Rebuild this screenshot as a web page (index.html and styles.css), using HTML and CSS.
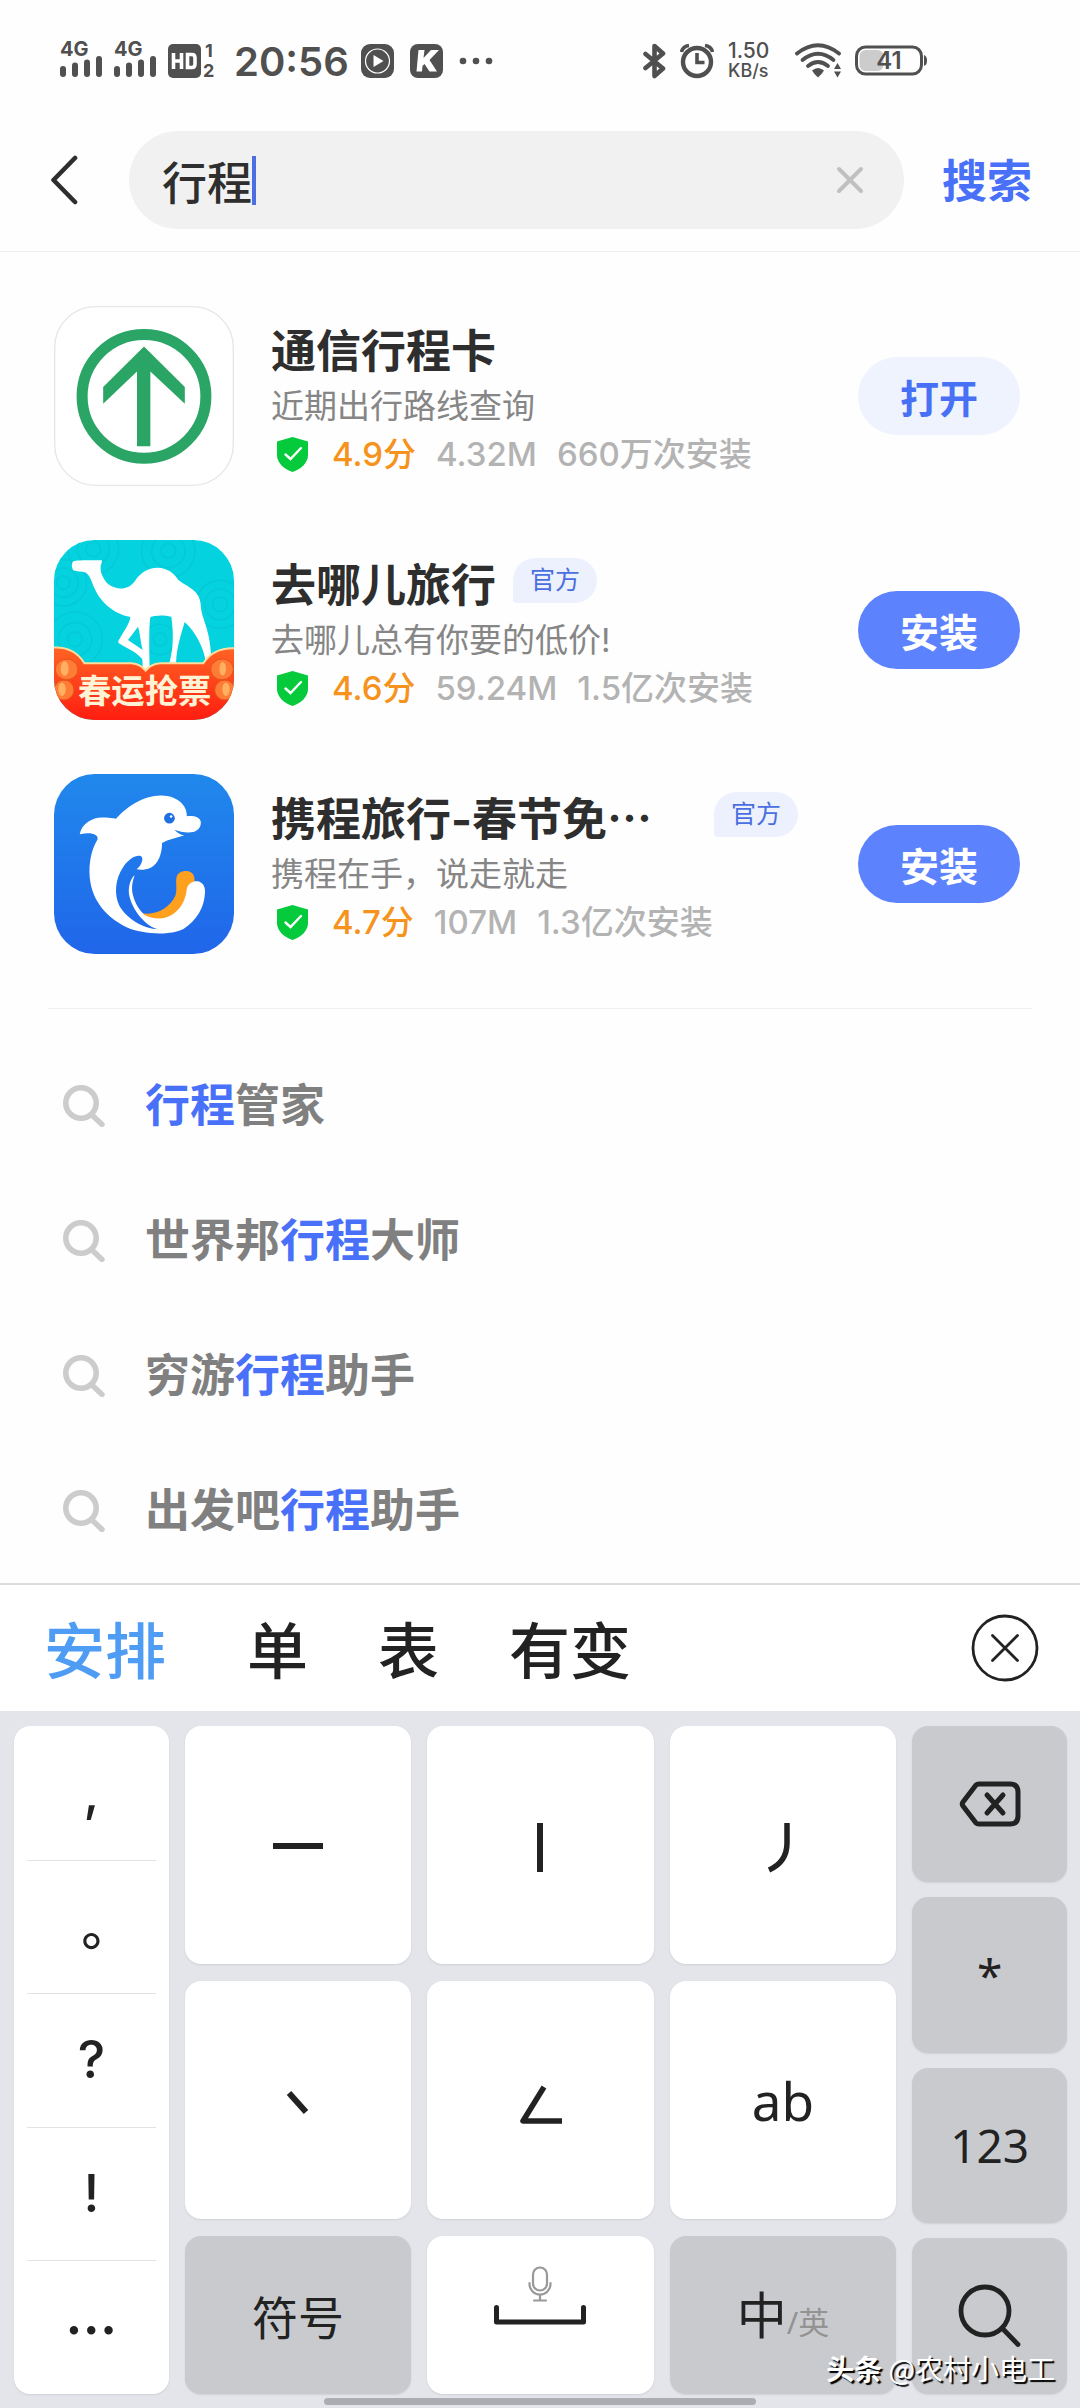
FILE: index.html
```html
<!DOCTYPE html>
<html lang="zh-CN">
<head>
<meta charset="utf-8">
<meta name="viewport" content="width=device-width, initial-scale=1">
<title>行程 - 搜索</title>
<link rel="stylesheet" href="styles.css">
</head>
<body>
<svg class="sprite" aria-hidden="true">
  <symbol id="shield" viewBox="0 0 31 35"><path d="M15.500 0 L31 4.500 V18 C31 26 24 32 15.500 35 C7 32 0 26 0 18 V4.500Z" fill="#04ca3c"/><path d="M8.500 17.500 L13.500 22 L24 11" fill="none" stroke="#fff" stroke-width="2.400" stroke-linecap="round"/></symbol>
  <symbol id="magnifier" viewBox="0 0 42 42"><circle cx="18" cy="18" r="15.200" fill="none" stroke="#ccc" stroke-width="5.600"/><path d="M29 30 L39 39.500" stroke="#ccc" stroke-width="5.400" stroke-linecap="round"/></symbol>
  <symbol id="bars" viewBox="0 0 42 21"><g fill="#505050"><rect x="0" y="10" width="6" height="11" rx="3"/><rect x="12" y="6.500" width="6" height="14.500" rx="3"/><rect x="24" y="3.500" width="6" height="17.500" rx="3"/><rect x="36" y="0" width="6" height="21" rx="3"/></g></symbol>
</svg>

<div class="status-bar">
  <svg class="signal" width="42" height="42" viewBox="0 0 42 42"><text x="0" y="21" class="signal-text">4G</text><use href="#bars" y="21" width="42" height="21"/></svg>
  <svg class="signal" width="42" height="42" viewBox="0 0 42 42"><text x="0" y="21" class="signal-text">4G</text><use href="#bars" y="21" width="42" height="21"/></svg>
  <svg width="48" height="46" viewBox="0 -5 48 46">
    <rect x="0" y="1" width="33" height="34" rx="5" fill="#505050"/>
    <path d="M5.500 10 V26 M13.500 10 V26 M5.500 18 H13.500 M19.500 11.500 H24 Q27 11.500 27 15 V21 Q27 24.500 24 24.500 H19.500Z" fill="none" stroke="#fff" stroke-width="3.600"/>
    <text x="37" y="14" class="sim-text">1</text><text x="35" y="34" class="sim-text">2</text>
  </svg>
  <time class="clock">20:56</time>
  <svg width="33" height="34" viewBox="0 0 33 34"><rect width="33" height="34" rx="9" fill="#505050"/><circle cx="16.500" cy="17" r="12" fill="none" stroke="#fff" stroke-width="1.200"/><path d="M12.500 11 L22.500 17 L12.500 23Z" fill="#fff"/></svg>
  <svg class="app-k" width="33" height="34" viewBox="0 0 33 34"><rect width="33" height="34" rx="8" fill="#505050"/><path d="M8.500 6 H14.500 L13.500 14 L21 6 H29 L19.500 16 L27 27.500 H19.500 L14.500 20 L12.500 22 L12 27.500 H6.500Z" fill="#fff"/></svg>
  <svg width="34" height="8" viewBox="0 0 34 8" fill="#505050"><circle cx="4" cy="4" r="3.300"/><circle cx="17" cy="4" r="3.300"/><circle cx="30" cy="4" r="3.300"/></svg>
  <div class="status-right">
    <svg width="23" height="36" viewBox="0 0 23 36" fill="none" stroke="#505050" stroke-width="4.600" stroke-linejoin="round" stroke-linecap="round"><path d="M2.500 11 L20 25.500 L11.500 33 V3 L20 10.500 L2.500 25"/></svg>
    <svg width="34" height="36" viewBox="0 0 34 36" fill="none" stroke="#505050"><circle cx="17" cy="19" r="14" stroke-width="4.400"/><path d="M17 10 V19.500 H24.500" stroke-width="3.600"/><path d="M1.500 9 Q2.500 3.500 9 2.500 M32.500 9 Q31.500 3.500 25 2.500" stroke-width="3.600"/></svg>
    <div class="net-speed"><span class="net-value">1.50</span><span class="net-unit">KB/s</span></div>
    <svg width="46" height="36" viewBox="0 0 46 36"><g fill="none" stroke="#505050" stroke-width="3.800" stroke-linecap="round"><path d="M2 10.500 Q23 -6 44 10.500"/><path d="M7.500 17 Q23 4.500 38.500 17"/><path d="M13 23 Q23 15 33 23"/></g><path d="M17 27.500 Q23 22.500 29 27.500 Q27 31 23 34.500 Q19 31 17 27.500Z M39 26 L42.500 20 L46 26Z M39 28.500 L42.500 34.500 L46 28.500Z" fill="#505050"/></svg>
    <svg width="72" height="32" viewBox="0 0 72 32"><rect x="4.500" y="5" width="24" height="21" rx="6" fill="#ccc"/><rect x="1.500" y="2" width="65" height="27" rx="9" fill="none" stroke="#505050" stroke-width="3"/><path d="M69 10 Q72 11 72 15.500 Q72 20 69 21Z" fill="#505050"/><text x="34" y="24" class="battery-text" text-anchor="middle">41</text></svg>
  </div>
</div>

<header class="search-header">
  <button class="icon-button" type="button" aria-label="返回"><svg width="28" height="50" viewBox="0 0 28 50"><path d="M25 3 L3.500 25 L25 47" fill="none" stroke="#2e2e2e" stroke-width="4.600" stroke-linecap="round" stroke-linejoin="round"/></svg></button>
  <form class="search-form" role="search">
    <div class="search-field">
      <input class="search-input" type="text" value="行程" aria-label="搜索应用">
      <span class="caret"></span>
      <button class="icon-button clear" type="button" aria-label="清除"><svg width="28" height="28" viewBox="0 0 28 28"><path d="M3 3 L25 25 M25 3 L3 25" stroke="#c0c0c0" stroke-width="4" stroke-linecap="round"/></svg></button>
    </div>
    <button class="search-submit" type="submit">搜索</button>
  </form>
</header>

<main class="results">
  <section class="apps">
    <article class="app">
      <svg class="app-icon" viewBox="73 48 538 538" role="img" aria-label="通信行程卡">
        <rect x="75" y="50" width="534" height="534" rx="122" fill="#fff" stroke="#e6e6e6" stroke-width="4"/>
        <circle cx="342" cy="318" r="185" fill="none" stroke="#2ba566" stroke-width="33"/>
        <path d="M342 169 L464 290 V340 L361 244 V467 H321 V244 L220 340 V290Z" fill="#2ba566"/>
      </svg>
      <div class="info">
        <div class="title-row"><h2 class="title">通信行程卡</h2></div>
        <p class="summary">近期出行路线查询</p>
        <p class="meta"><svg class="shield" width="31" height="35"><use href="#shield"/></svg><span class="score">4.9分</span><span>4.32M</span><span>660万次安装</span></p>
      </div>
      <button class="action open" type="button">打开</button>
    </article>

    <article class="app">
      <svg class="app-icon" viewBox="12 12 540 540" role="img" aria-label="去哪儿旅行">
        <defs>
          <clipPath id="camel-clip"><rect x="12" y="12" width="540" height="540" rx="122"/></clipPath>
          <linearGradient id="banner" x1="0" y1="0" x2="0" y2="1"><stop offset="0" stop-color="#ff6424"/><stop offset="1" stop-color="#ff1c10"/></linearGradient>
        </defs>
        <g clip-path="url(#camel-clip)">
          <rect x="12" y="12" width="540" height="540" fill="#04d3df"/>
          <g fill="none" stroke="#05c9d7" stroke-width="5">
            <circle cx="130" cy="40" r="22"/><circle cx="130" cy="40" r="48"/><circle cx="130" cy="40" r="76"/>
            <circle cx="355" cy="45" r="22"/><circle cx="355" cy="45" r="50"/><circle cx="355" cy="45" r="80"/>
            <circle cx="40" cy="140" r="20"/><circle cx="40" cy="140" r="44"/><circle cx="40" cy="140" r="70"/>
            <circle cx="75" cy="310" r="22"/><circle cx="75" cy="310" r="50"/><circle cx="75" cy="310" r="82"/>
            <circle cx="510" cy="205" r="22"/><circle cx="510" cy="205" r="46"/><circle cx="510" cy="205" r="72"/>
            <circle cx="330" cy="310" r="20"/><circle cx="330" cy="310" r="46"/>
          </g>
          <path fill="#fff" fill-rule="evenodd" d="M70 76 C80 72 130 73 155 73 C158 80 152 85 152 90 C150 110 160 130 175 145 C200 163 235 163 255 135 C270 110 295 95 322 95 C355 95 375 115 385 132 C400 145 430 155 445 180 C455 200 450 215 458 240 C470 275 482 310 483 362 L467 376 C462 340 440 290 404 258 C395 290 380 330 378 382 L358 382 C372 330 370 290 364 242 C340 236 310 238 301 244 C296 280 298 340 299 400 L278 398 C278 380 278 375 276 368 C255 345 225 335 212 325 C203 320 203 315 209 308 C222 285 238 265 241 243 C190 235 150 195 135 160 C125 140 122 120 108 110 C95 105 80 108 70 103 C64 95 64 82 70 76Z M264 272 L234 312 L278 342 C271 315 270 290 264 272Z"/>
          <path d="M8 335 C50 330 85 350 103 382 L245 382 C265 384 278 392 287 404 C296 392 310 384 330 382 L460 382 C480 350 515 335 556 337 V556 H8Z" fill="url(#banner)" stroke="#ffdc9c" stroke-width="6"/>
          <g fill="#ff7c36" stroke="#e2541c" stroke-width="3"><ellipse cx="50" cy="400" rx="34" ry="31"/><ellipse cx="42" cy="462" rx="30" ry="30"/><ellipse cx="516" cy="400" rx="34" ry="31"/><ellipse cx="524" cy="462" rx="30" ry="30"/></g>
          <g fill="#ffb060"><ellipse cx="44" cy="398" rx="12" ry="22"/><ellipse cx="36" cy="460" rx="11" ry="20"/><ellipse cx="518" cy="398" rx="10" ry="20"/><ellipse cx="528" cy="460" rx="11" ry="20"/></g>
          <text x="284" y="502" text-anchor="middle" class="banner-text">春运抢票</text>
        </g>
      </svg>
      <div class="info">
        <div class="title-row"><h2 class="title">去哪儿旅行</h2><span class="badge">官方</span></div>
        <p class="summary">去哪儿总有你要的低价!</p>
        <p class="meta"><svg class="shield" width="31" height="35"><use href="#shield"/></svg><span class="score">4.6分</span><span>59.24M</span><span>1.5亿次安装</span></p>
      </div>
      <button class="action" type="button">安装</button>
    </article>

    <article class="app">
      <svg class="app-icon" viewBox="73 42 538 538" role="img" aria-label="携程旅行">
        <defs><linearGradient id="sea" x1="0" y1="0" x2="0" y2="1"><stop offset="0" stop-color="#2088ec"/><stop offset="1" stop-color="#2066ea"/></linearGradient></defs>
        <rect x="73" y="42" width="538" height="538" rx="122" fill="url(#sea)"/>
        <path fill="#ffa01e" d="M335 458 C380 466 420 440 436 405 C442 385 436 370 439 352 C443 335 460 330 475 333 C490 337 496 350 492 372 C480 400 470 440 440 465 C400 490 355 480 335 458Z"/>
        <path fill="#fff" d="M150 222 C155 190 190 172 215 172 C235 172 250 174 258 176 C290 140 340 105 395 106 C440 107 472 135 470 168 C490 166 512 170 512 188 C512 208 495 217 475 217 C460 217 445 214 433 209 C440 218 452 224 462 226 C440 232 415 238 396 248 C396 280 385 310 362 322 C345 330 330 328 320 327 C332 318 340 300 336 291 C328 280 300 290 280 320 C256 355 252 400 268 435 C290 475 340 505 385 506 C350 500 305 450 297 400 C295 375 303 352 314 345 C308 360 304 380 308 400 C315 430 330 452 345 464 C390 484 425 472 450 440 C465 420 468 400 470 385 C475 365 495 360 508 364 C522 370 526 385 524 400 C522 440 500 480 460 505 C420 525 340 522 290 500 C220 465 180 410 179 335 C179 290 190 260 203 238 C206 222 185 215 150 222Z"/>
        <circle cx="418" cy="174" r="16" fill="#1d6fe2"/><circle cx="423" cy="169" r="4" fill="#fff"/>
      </svg>
      <div class="info">
        <div class="title-row"><h2 class="title">携程旅行-春节免<span class="more">…</span></h2><span class="badge">官方</span></div>
        <p class="summary">携程在手，说走就走</p>
        <p class="meta"><svg class="shield" width="31" height="35"><use href="#shield"/></svg><span class="score">4.7分</span><span>107M</span><span>1.3亿次安装</span></p>
      </div>
      <button class="action" type="button">安装</button>
    </article>
  </section>

  <ul class="suggestions">
    <li><a class="suggestion" href="#"><svg width="42" height="42"><use href="#magnifier"/></svg><span><em>行程</em>管家</span></a></li>
    <li><a class="suggestion" href="#"><svg width="42" height="42"><use href="#magnifier"/></svg><span>世界邦<em>行程</em>大师</span></a></li>
    <li><a class="suggestion" href="#"><svg width="42" height="42"><use href="#magnifier"/></svg><span>穷游<em>行程</em>助手</span></a></li>
    <li><a class="suggestion" href="#"><svg width="42" height="42"><use href="#magnifier"/></svg><span>出发吧<em>行程</em>助手</span></a></li>
  </ul>
</main>

<section class="keyboard" aria-label="键盘">
  <div class="candidates">
    <button class="candidate active" type="button">安排</button>
    <button class="candidate" type="button">单</button>
    <button class="candidate" type="button">表</button>
    <button class="candidate" type="button">有变</button>
    <button class="icon-button collapse" type="button" aria-label="收起"><svg width="68" height="68" viewBox="0 0 68 68" fill="none" stroke="#222" stroke-linecap="round"><circle cx="34" cy="34" r="32" stroke-width="2.800"/><path d="M21.500 21.500 L46.500 46.500 M46.500 21.500 L21.500 46.500" stroke-width="2.800"/></svg></button>
  </div>

  <div class="keypad">
    <div class="punctuation">
      <button class="mark" type="button">,</button>
      <button class="mark full-stop" type="button">。</button>
      <button class="mark" type="button">?</button>
      <button class="mark" type="button">!</button>
      <button class="mark ellipsis" type="button">…</button>
    </div>

    <div class="strokes">
      <button class="key" type="button" aria-label="横"><svg width="60" height="60" viewBox="0 0 60 60"><path d="M5 31 H55" stroke="#222" stroke-width="6"/></svg></button>
      <button class="key" type="button" aria-label="竖"><svg width="60" height="60" viewBox="0 0 60 60"><path d="M30 8 V57" stroke="#222" stroke-width="6"/></svg></button>
      <button class="key" type="button" aria-label="撇"><svg width="60" height="60" viewBox="0 0 60 60"><path d="M34 8 V28 Q34 47 16 55" fill="none" stroke="#222" stroke-width="5.500"/></svg></button>
      <button class="key" type="button" aria-label="点"><svg width="60" height="60" viewBox="0 0 60 60"><path d="M21 23 L38 42" stroke="#222" stroke-width="6"/></svg></button>
      <button class="key" type="button" aria-label="折"><svg width="60" height="60" viewBox="0 0 60 60"><path d="M34 17 L13 51 H52" fill="none" stroke="#222" stroke-width="5.500" stroke-linejoin="round"/></svg></button>
      <button class="key letters" type="button">ab</button>
      <button class="key gray" type="button">符号</button>
      <button class="key space" type="button" aria-label="空格">
        <svg width="24" height="36" viewBox="0 0 24 36" fill="none" stroke="#999" stroke-width="2.200" stroke-linecap="round"><rect x="5" y="1.500" width="14" height="23" rx="7"/><path d="M1.500 17 V18 A10.500 10.500 0 0 0 22.500 18 V17 M12 29 V34 M6 34.500 H18"/></svg>
        <svg width="92" height="20" viewBox="0 0 92 20"><path d="M2.500 2.500 V17 H89.500 V2.500" fill="none" stroke="#222" stroke-width="5" stroke-linecap="round" stroke-linejoin="round"/></svg>
      </button>
      <button class="key gray language" type="button"><span>中</span><span class="alt">/英</span></button>
    </div>

    <div class="functions">
      <button class="key gray" type="button" aria-label="删除"><svg width="62" height="46" viewBox="0 0 62 46" fill="none" stroke="#222" stroke-width="5" stroke-linejoin="round" stroke-linecap="round"><path d="M20 3 H51 Q59 3 59 11 V35 Q59 43 51 43 H20 Q18 43 17 42 L4 25 Q2.500 23 4 21 L17 4 Q18 3 20 3Z"/><path d="M28 14 L44 32 M44 14 L28 32"/></svg></button>
      <button class="key gray" type="button">*</button>
      <button class="key gray" type="button">123</button>
      <button class="key gray" type="button" aria-label="搜索"><svg width="64" height="64" viewBox="0 0 64 64" fill="none" stroke="#222" stroke-width="4.800" stroke-linecap="round"><circle cx="27" cy="27" r="24"/><path d="M44 44 L60 60.500"/></svg></button>
    </div>
  </div>
  <div class="home-bar"></div>
  <p class="watermark"><b>头条</b> @农村小电工</p>
</section>
</body>
</html>
```

FILE: styles.css
```css
* { box-sizing: border-box; }

body {
  margin: 0;
  min-height: 100vh;
  display: flex;
  flex-direction: column;
  background: #fefefe;
  color: #2e2e2e;
  font-family: Inter, "Noto Sans CJK SC", sans-serif;
}

h2, p, ul { margin: 0; padding: 0; }

button, input {
  margin: 0;
  padding: 0;
  border: 0;
  background: none;
  color: inherit;
  font: inherit;
}

svg { display: block; flex: none; }

.sprite { position: absolute; width: 0; height: 0; }

.icon-button { display: flex; flex: none; }

/* status bar */
.status-bar {
  display: flex;
  align-items: center;
  gap: 12px;
  height: 110px;
  padding: 12px 153px 0 60px;
  color: #505050;
}

.signal { margin-bottom: 10px; }
.signal-text { font-size: 20px; font-weight: 700; fill: #505050; }
.sim-text { font-size: 18px; font-weight: 700; fill: #505050; }
.battery-text { font-size: 24px; font-weight: 600; fill: #505050; }

.clock {
  margin-left: 6px;
  padding-top: 2px;
  font-size: 40px;
  font-weight: 600;
  line-height: 48px;
}

.app-k { margin: 0 4px; }

.status-right {
  display: flex;
  align-items: center;
  gap: 14px;
  margin-left: auto;
}

.net-speed {
  display: flex;
  flex-direction: column;
  width: 45px;
  margin-right: 8px;
  font-weight: 500;
  line-height: 20px;
}

.net-value { font-size: 21px; }
.net-unit { font-size: 18px; }

/* search header */
.search-header {
  display: flex;
  align-items: center;
  gap: 51px;
  padding: 21px 48px 22px 50px;
  border-bottom: 1px solid #eee;
}

.search-form {
  flex: 1;
  display: flex;
  align-items: center;
  gap: 38px;
}

.search-field {
  flex: 1;
  display: flex;
  align-items: center;
  height: 98px;
  padding: 0 40px 0 33px;
  border-radius: 49px;
  background: #f1f1f1;
}

.search-input {
  width: 2em;
  height: 64px;
  outline: none;
  font-size: 45px;
  font-weight: 500;
}

.caret { width: 4px; height: 49px; background: #4b6fe3; }
.clear { margin-left: auto; }

.search-submit {
  padding-top: 4px;
  color: #4870f8;
  font-size: 45px;
  font-weight: 700;
  line-height: 64px;
}

/* app results */
.results { flex: 1; }

.apps {
  display: flex;
  flex-direction: column;
  gap: 54px;
  padding: 54px 0;
  margin: 0 48px;
  border-bottom: 1px solid #eee;
}

.app {
  display: flex;
  align-items: center;
  padding: 0 12px 0 6px;
}

.app-icon { width: 180px; height: 180px; }

.banner-text {
  fill: #fff3d6;
  font-size: 100px;
  font-weight: 700;
  font-family: "Noto Sans CJK SC", sans-serif;
}

.info {
  flex: 1;
  min-width: 0;
  padding: 8px 24px 0 37px;
}

.title-row {
  display: flex;
  align-items: flex-start;
  gap: 17px;
}

.title {
  font-size: 45px;
  font-weight: 700;
  line-height: 56px;
  white-space: nowrap;
}

.more {
  display: inline-block;
  width: 2em;
  font-family: "Noto Sans CJK SC", sans-serif;
  line-height: 1;
}

.badge {
  flex: none;
  height: 45px;
  padding: 0 17px;
  border-radius: 23px 23px 23px 4px;
  background: #edf1fd;
  color: #4a6fe0;
  font-size: 25px;
  line-height: 45px;
}

.summary {
  color: #868686;
  font-size: 33px;
  line-height: 52px;
  white-space: nowrap;
}

.meta {
  display: flex;
  align-items: center;
  gap: 20px;
  color: #b3b3b3;
  font-size: 33px;
  font-weight: 500;
  line-height: 44px;
  white-space: nowrap;
}

.shield { margin: 0 4px 0 6px; }
.score { color: #f5931c; }

.action {
  flex: none;
  width: 162px;
  height: 78px;
  border-radius: 39px;
  background: #5c82fe;
  color: #fff;
  font-size: 39px;
  font-weight: 700;
}

.action.open { background: #eef3fe; color: #4770f5; }

/* suggestions */
.suggestions {
  padding: 29px 63px 5px;
  list-style: none;
}

.suggestion {
  display: flex;
  align-items: center;
  gap: 40px;
  height: 135px;
  color: #808080;
  font-size: 45px;
  font-weight: 700;
  line-height: 54px;
  text-decoration: none;
}

.suggestion em { color: #4870f8; font-style: normal; }

/* keyboard */
.keyboard {
  position: relative;
  background: #e4e5eb;
  color: #222;
}

.candidates {
  display: flex;
  align-items: center;
  gap: 70px;
  height: 128px;
  padding: 0 41px 0 44px;
  border-top: 2px solid #dcdcde;
  background: #fff;
}

.candidate {
  padding-top: 8px;
  font-size: 61px;
  font-weight: 500;
  line-height: 90px;
}

.candidate.active { margin-right: 11px; color: #4f9cf5; }
.collapse { margin-left: auto; }

.keypad {
  display: grid;
  grid-template-columns: 155fr 713fr 155fr;
  gap: 16px;
  height: 683px;
  padding: 15px 13px 0 14px;
}

.punctuation {
  display: grid;
  grid-template-rows: repeat(5, 1fr);
  padding: 0 13px;
  border-radius: 16px;
  background: #fff;
  box-shadow: 0 1px 2px #cfd0d6;
}

.mark {
  font-size: 52px;
  font-weight: 500;
  line-height: 60px;
}

.mark + .mark { border-top: 1px solid #e2e2e4; }
.full-stop { padding-top: 24px; font-family: "Noto Sans CJK TC", sans-serif; }
.ellipsis { font-family: "Noto Sans CJK SC", sans-serif; font-weight: 700; }

.strokes {
  display: grid;
  grid-template-columns: repeat(3, 1fr);
  grid-template-rows: 238fr 238fr 158fr;
  gap: 17px 16px;
}

.functions {
  display: grid;
  grid-template-rows: repeat(4, 1fr);
  gap: 15px;
}

.key {
  display: flex;
  align-items: center;
  justify-content: center;
  border-radius: 16px;
  background: #fff;
  box-shadow: 0 1px 2px #cfd0d6;
  font-family: "Noto Sans", "Noto Sans CJK SC", sans-serif;
  font-size: 46px;
}

.key.gray { background: #c9cace; }
.key.letters { font-size: 53px; }

.key.space {
  flex-direction: column;
  gap: 3px;
  padding-bottom: 40px;
}

.key.language { align-items: baseline; padding-top: 40px; font-size: 50px; }
.alt { color: #939393; font-size: 31px; }

.home-bar {
  width: 40%;
  height: 7px;
  margin: 4px auto 3px;
  border-radius: 4px;
  background: #acacb3;
}

/* credit laid over the keyboard corner */
.watermark {
  position: absolute;
  right: 25px;
  bottom: 20px;
  color: #fff;
  font-family: "Noto Sans CJK SC", sans-serif;
  font-size: 28px;
  line-height: 40px;
  text-shadow: 2px 2px 1px #000;
}
```
